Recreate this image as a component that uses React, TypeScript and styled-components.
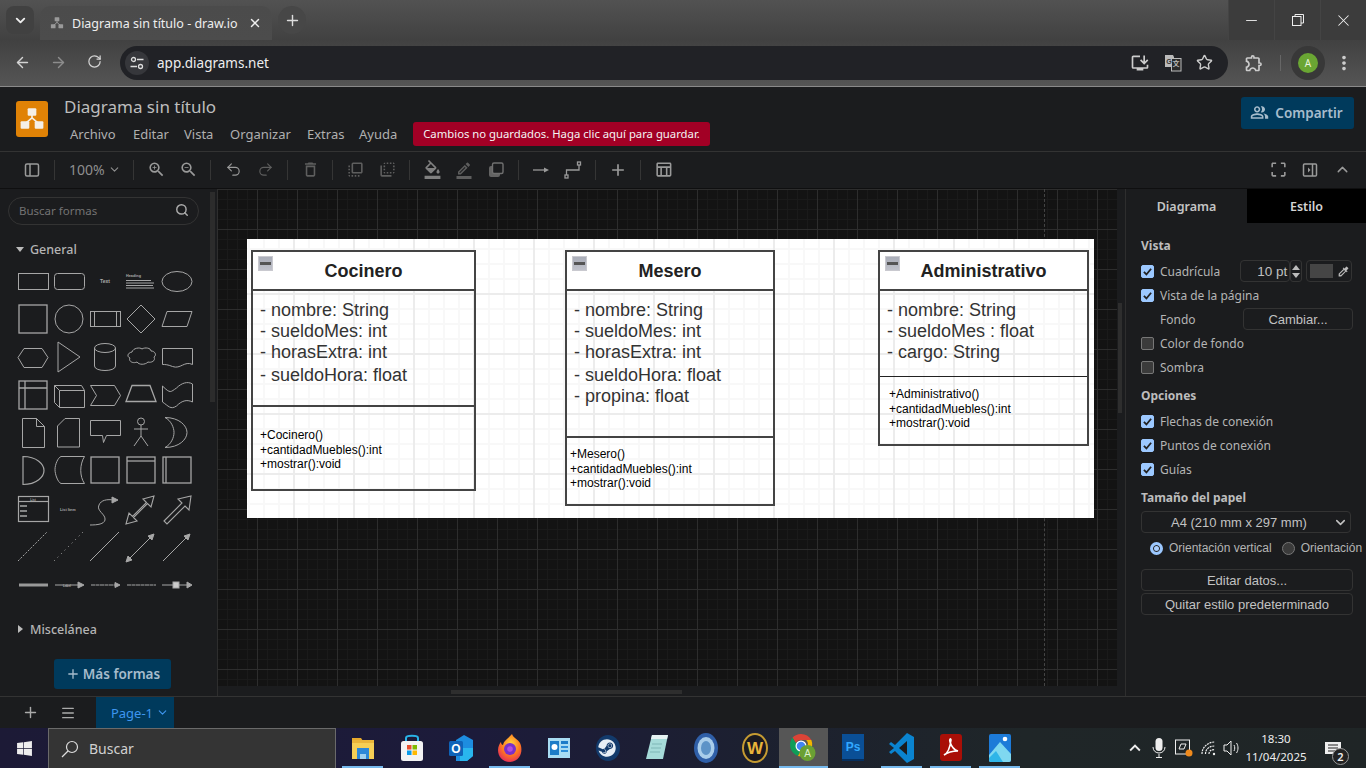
import React from "react";
import styled, { createGlobalStyle } from "styled-components";
import { ArrowLeft, ArrowRight, RotateCw, Star, X, Plus, ChevronDown, ChevronUp, Minus, Menu, Search, Undo2, Redo2 } from "lucide-react";
import {
  MdOutlineZoomIn, MdOutlineZoomOut, MdDeleteOutline, MdOutlineFlipToFront, MdOutlineFlipToBack,
  MdOutlineFormatColorFill, MdOutlineBorderColor, MdAdd, MdOutlineTableChart, MdCropFree, MdOutlineInstallDesktop,
  MdMoreVert, MdOutlineExtension, MdOutlinePeopleAlt, MdColorize, MdKeyboardArrowUp,
} from "react-icons/md";
import { FaWindows, FaSteam } from "react-icons/fa";

const UI = `"Noto Sans", "Open Sans", sans-serif`;
const ARIAL = `"Liberation Sans", Arial, sans-serif`;

const Global = createGlobalStyle`
  html, body { margin: 0; padding: 0; width: 1366px; height: 768px; overflow: hidden; background: #1b1c1e; font-family: ${UI}; }
  * { box-sizing: border-box; }
`;

const Screen = styled.div`width: 1366px; height: 768px; display: flex; flex-direction: column; overflow: hidden;`;

/* ---------- browser ---------- */
const TabStrip = styled.div`height: 40px; display: flex; align-items: flex-end; background: linear-gradient(#525252, #414141); padding-left: 6px;`;
const TabMenu = styled.div`width: 28px; height: 28px; margin-bottom: 6px; border-radius: 8px; background: #414141; color: #eee; display: flex; align-items: center; justify-content: center;`;
const Tab = styled.div`width: 232px; height: 34px; margin-left: 6px; padding: 0 10px; border-radius: 10px 10px 0 0; background: linear-gradient(#4b4b4b, #4c4c4c); display: flex; align-items: center; color: #eee; font-size: 12.5px;`;
const TabTitle = styled.span`margin-left: 8px; flex: 1; white-space: nowrap;`;
const NewTab = styled.div`width: 28px; height: 28px; margin: 0 0 6px 6px; border-radius: 50%; background: #474747; color: #ddd; display: flex; align-items: center; justify-content: center;`;
const WindowButtons = styled.div`margin-left: auto; align-self: stretch; display: flex;`;
const WindowButton = styled.div`width: 46px; background: #3c3c3c; border-left: 1px solid #444; color: #eee; display: flex; align-items: center; justify-content: center;`;
const BrowserBar = styled.div`height: 47px; display: flex; align-items: center; padding: 0 0 1px 0; background: linear-gradient(#414141, #555); border-bottom: 1px solid #8a8a8a;`;
const NavButton = styled.div<{ $dim?: boolean }>`width: 36px; display: flex; justify-content: center; color: ${p => (p.$dim ? "#8d8d8d" : "#d4d4d4")};`;
const NavGroup = styled.div`width: 120px; padding-left: 4px; display: flex;`;
const UrlBar = styled.div`width: 1108px; height: 34px; border-radius: 17px; background: #212226; display: flex; align-items: center; padding: 0 15px 0 5px; color: #eee; font-size: 13.5px;`;
const SiteInfo = styled.div`width: 24px; height: 24px; border-radius: 50%; background: #36373b; display: flex; align-items: center; justify-content: center; margin-right: 8px;`;
const UrlIcons = styled.div`margin-left: auto; display: flex; gap: 14px; align-items: center; color: #ccc;`;
const ExtensionSlot = styled.div`width: 52px; padding-left: 16px; color: #ccc; display: flex;`;
const BarDivider = styled.div`width: 1px; height: 16px; background: #666; margin-right: 10px;`;
const AvatarRing = styled.div`width: 34px; height: 34px; border-radius: 50%; background: #383838; display: flex; align-items: center; justify-content: center;`;
const Avatar = styled.div`width: 20px; height: 20px; border-radius: 50%; background: #6aa633; color: #e8f4dc; font-size: 10px; display: flex; align-items: center; justify-content: center;`;
const KebabSlot = styled.div`margin-left: 8px; color: #ccc; display: flex;`;

/* ---------- draw.io header ---------- */
const AppHeader = styled.div`height: 65px; display: flex; padding: 14px 12px 0 16px; background: #1b1c1e; border-bottom: 1px solid #333;`;
const Logo = styled.div`width: 32px; height: 36px; border-radius: 3px; background: #e08206; display: flex; align-items: center; justify-content: center;`;
const HeaderText = styled.div`margin-left: 16px; display: flex; flex-direction: column;`;
const DocTitle = styled.div`font-size: 17px; line-height: 16px; color: #bdbdbd; height: 22px; margin-top: -2px; white-space: nowrap;`;
const MenuRow = styled.div`display: flex; align-items: center; height: 25px; margin: 0 0 0 6px;`;
const MenuItem = styled.span<{ $w: number }>`width: ${p => p.$w}px; font-size: 13px; color: #b0b0b0; white-space: nowrap;`;
const Banner = styled.div`height: 24px; width: 297px; border-radius: 3px; background: #a20025; color: #f4f4f4; font-size: 11.3px; display: flex; align-items: center; justify-content: center; white-space: nowrap;`;
const Share = styled.div`margin-left: auto; margin-top: -4px; width: 113px; height: 32px; border-radius: 3px; background: #003a5c; color: #a6bccc; font-size: 13.5px; font-weight: 600; padding: 0 2px 1px 0; display: flex; align-items: center; justify-content: center; gap: 6px;`;

/* ---------- toolbar ---------- */
const Toolbar = styled.div`height: 37px; display: flex; align-items: center; padding: 0 8px 1px 16px; background: #1b1c1e; border-bottom: 1px solid #0f0f10;`;
const ToolButton = styled.div<{ $tone?: string }>`width: 32px; display: flex; align-items: center; justify-content: center; color: ${p => p.$tone ?? "#9a9a9a"};`;
const ToolSep = styled.div`width: 1px; height: 20px; margin: 0 6px 0 6px; background: #353535;`;
const ZoomSelect = styled.div`width: 66px; padding-left: 8px; display: flex; align-items: center; gap: 3px; color: #8e8e8e; font-size: 14px;`;
const ToolEnd = styled.div`margin-left: auto; display: flex;`;
const DIM = "#5e5e5e";
const MID = "#808080";

/* ---------- main ---------- */
const Main = styled.div`height: 507px; display: flex; background: #1b1c1e;`;
const Sidebar = styled.div`width: 218px; border-right: 1px solid #2e2e2e; position: relative; padding: 8px 0 0 8px; display: flex; flex-direction: column;`;
const SearchBox = styled.div`width: 191px; height: 28px; border: 1px solid #333; border-radius: 14px; padding: 0 9px 2px 10px; display: flex; align-items: center; justify-content: space-between; color: #737373; font-size: 11.5px; svg { color: #aaa; }`;
const SectionHead = styled.div`display: flex; align-items: center; height: 20px; font-size: 12.5px; color: #b4b4b4; font-weight: 500;`;
const Triangle = styled.span<{ $open?: boolean }>`width: 0; height: 0; margin-right: 6px; ${p => p.$open
    ? "margin-left: 8px; border-left: 4px solid transparent; border-right: 4px solid transparent; border-top: 5px solid #bbb;"
    : "margin-left: 10px; margin-right: 7px; border-top: 4px solid transparent; border-bottom: 4px solid transparent; border-left: 5px solid #bbb;"}`;
const GeneralHead = styled(SectionHead)`margin-top: 14px;`;
const ShapeGrid = styled.div`display: grid; grid-template-columns: repeat(5, 36px); grid-auto-rows: 38px; margin: 3px 0 0 7px; svg { display: block; overflow: visible; }`;
const MiscHead = styled(SectionHead)`margin-top: 15px;`;
const MoreShapes = styled.div`margin: 20px 0 0 46px; width: 117px; height: 30px; border-radius: 3px; background: #003a5c; color: #a6bccc; font-size: 13.5px; font-weight: 600; display: flex; align-items: center; justify-content: center; gap: 2px;`;
const SideScroll = styled.div`position: absolute; right: 2px; top: 3px; width: 5px; height: 210px; background: #2c2c2c;`;

const Center = styled.div`width: 908px; position: relative; border-right: 1px solid #2e2e2e;`;
const Canvas = styled.div`
  width: 899px; height: 497px; position: relative; overflow: hidden; background-color: #131313;
  background-image:
    linear-gradient(#2d2d2d 1px, transparent 1px), linear-gradient(90deg, #2d2d2d 1px, transparent 1px),
    linear-gradient(#1a1a1a 1px, transparent 1px), linear-gradient(90deg, #1a1a1a 1px, transparent 1px);
  background-size: 40px 40px, 40px 40px, 10px 10px, 10px 10px;
  background-position: 0 0, 39px 0, 0 0, 9px 0;
`;
const PageBreak = styled.div`position: absolute; left: 826px; top: 0; bottom: 0; border-left: 1px dashed #444;`;
const Page = styled.div`
  position: absolute; left: 29px; top: 50px; width: 847px; height: 279px; background-color: #fff;
  background-image:
    linear-gradient(#ececec 2px, transparent 2px), linear-gradient(90deg, #ececec 2px, transparent 2px),
    linear-gradient(#f8f8f8 2px, transparent 2px), linear-gradient(90deg, #f8f8f8 2px, transparent 2px);
  background-size: 60px 60px, 60px 60px, 15px 15px, 15px 15px;
  background-position: 0 -6px, 46px 0, 0 9px, 1px 0;
`;
const HScroll = styled.div`position: absolute; left: 233px; bottom: 2px; width: 231px; height: 4px; background: #2e2e2e;`;
const VScroll = styled.div`position: absolute; right: 3px; top: 114px; width: 4px; height: 110px; background: #2e2e2e;`;

const UmlBox = styled.div<{ $x: number; $w: number; $h: number }>`
  position: absolute; left: ${p => p.$x}px; top: 11px; width: ${p => p.$w}px; height: ${p => p.$h}px;
  border: 2px solid #444; display: flex; flex-direction: column; font-family: ${ARIAL}; background: transparent;
`;
const UmlHead = styled.div`height: 39px; flex: none; border-bottom: 2px solid #444; background: #fff; display: flex; align-items: center; justify-content: center; font-size: 18px; font-weight: 700; color: #222; position: relative; padding-top: 2px;`;
const CollapseIcon = styled.div`position: absolute; left: 5px; top: 4px; width: 15px; height: 15px; background: linear-gradient(#a9adb8, #c0c2cb); border: 1px solid #c9c9cf; display: flex; align-items: center; justify-content: center; &::after { content: ""; width: 11px; height: 3px; background: #555; }`;
const UmlAttrs = styled.div<{ $h: number; $thin?: boolean }>`height: ${p => p.$h}px; flex: none; padding: 9px 0 0 7px; border-bottom: ${p => (p.$thin ? "1px solid #222" : "2px solid #444")}; font-size: 18px; line-height: 21px; color: #333;`;
const AttrLine = styled.div<{ $extra?: boolean }>`white-space: nowrap; margin-top: ${p => (p.$extra ? 2 : 0)}px;`;
const UmlMethods = styled.div<{ $top: number; $left: number }>`padding: ${p => p.$top}px 0 0 ${p => p.$left}px; font-size: 12px; line-height: 14.5px; color: #000; white-space: nowrap;`;

const Strip = styled.div`height: 10px;`;

/* ---------- format panel ---------- */
const Panel = styled.div`width: 240px; overflow: hidden; color: #b9b9b9;`;
const Tabs = styled.div`display: flex; height: 34px;`;
const PanelTab = styled.div<{ $active?: boolean }>`width: ${p => (p.$active ? 121 : 119)}px; flex: none; display: flex; align-items: center; justify-content: center; font-size: 12.5px; font-weight: 600; background: ${p => (p.$active ? "transparent" : "#000")}; color: ${p => (p.$active ? "#c4c4c4" : "#d4d4d4")};`;
const PanelBody = styled.div`padding: 13px 0 0 15px; width: 240px;`;
const Heading = styled.div<{ $top?: number }>`font-size: 12px; font-weight: 700; color: #bdbdbd; height: 23px; line-height: 20px; margin-top: ${p => p.$top ?? 0}px; white-space: nowrap;`;
const Row = styled.div`height: 24px; display: flex; align-items: center; font-size: 12px; white-space: nowrap; color: #b4b4b4;`;
const Check = styled.span<{ $on?: boolean }>`width: 13px; height: 13px; margin-right: 6px; border-radius: 2px; flex: none; display: flex; align-items: center; justify-content: center; background: ${p => (p.$on ? "#9cc8ff" : "#3b3b3b")}; border: 1px solid ${p => (p.$on ? "#9cc8ff" : "#777")};`;
const Spinner = styled.div`margin-left: 20px; width: 50px; height: 22px; border: 1px solid #333; border-radius: 4px; display: flex; align-items: center; justify-content: flex-end; padding-right: 2px; font-size: 13.5px; color: #c0c0c0; font-family: ${ARIAL};`;
const Arrows = styled.div`width: 12px; height: 22px; border: 1px solid #333; border-radius: 3px; display: flex; flex-direction: column; align-items: center; justify-content: center; gap: 3px;`;
const Up = styled.span`border-left: 4px solid transparent; border-right: 4px solid transparent; border-bottom: 5px solid #bbb;`;
const Down = styled.span`border-left: 4px solid transparent; border-right: 4px solid transparent; border-top: 5px solid #bbb;`;
const ColorBox = styled.div`margin-left: 4px; width: 46px; height: 22px; border: 1px solid #333; border-radius: 4px; display: flex; align-items: center; padding-left: 3px; gap: 4px; color: #bbb;`;
const Swatch = styled.div`width: 23px; height: 14px; background: #454545;`;
const Label = styled.span`padding-left: 19px; width: 102px;`;
const FieldButton = styled.div<{ $w?: number }>`width: ${p => p.$w ?? 212}px; height: 22px; border: 1px solid #333; border-radius: 4px; display: flex; align-items: center; justify-content: center; font-family: ${ARIAL}; font-size: 13px; color: #c2c2c2; white-space: nowrap;`;
const PaperSelect = styled.div`width: 210px; height: 22px; border: 1px solid #333; border-radius: 4px; display: flex; align-items: center; padding: 0 2px 0 29px; justify-content: space-between; font-family: ${ARIAL}; font-size: 13px; color: #c2c2c2; white-space: nowrap;`;
const RadioRow = styled.div`height: 24px; margin-top: 3px; padding-left: 9px; display: flex; align-items: center; font-size: 12px; color: #b4b4b4; white-space: nowrap; font-family: ${ARIAL}; width: 300px;`;
const Radio = styled.span<{ $on?: boolean; $gap?: number }>`width: 13px; height: 13px; border-radius: 50%; margin: 0 6px 0 ${p => p.$gap ?? 0}px; flex: none; ${p => (p.$on ? "border: 3px solid #9cc8ff; box-shadow: inset 0 0 0 1px #222; background: #aacfff;" : "background: #3b3b3b; border: 1px solid #777;")}`;
const ButtonStack = styled.div`margin-top: 9px; display: flex; flex-direction: column; gap: 2px;`;

/* ---------- page tabs ---------- */
const PageBar = styled.div`height: 32px; display: flex; background: #1b1c1e; border-top: 1px solid #333; color: #aaa;`;
const PageAction = styled.div<{ $w: number }>`width: ${p => p.$w}px; display: flex; align-items: center; justify-content: center;`;
const PageTab = styled.div`width: 78px; margin-left: 20px; background: #003a5c; color: #3e96f0; font-size: 13px; display: flex; align-items: center; justify-content: flex-end; padding-right: 5px; gap: 3px;`;

/* ---------- taskbar ---------- */
const Taskbar = styled.div`height: 40px; display: flex; align-items: stretch; background: linear-gradient(90deg, #1c1a36 0%, #1c1b3a 35%, #1c2030 55%, #1f2628 75%, #1f2526 100%); color: #eee;`;
const StartButton = styled.div`width: 48px; display: flex; align-items: center; justify-content: center;`;
const TaskSearch = styled.div`width: 288px; background: #343434; border: 1px solid #6a6a6a; border-bottom: none; display: flex; align-items: center; padding-left: 12px; gap: 10px; font-size: 14px; color: #d0d0d0;`;
const AppCell = styled.div<{ $active?: boolean; $open?: boolean }>`
  width: 49px; display: flex; align-items: center; justify-content: center; position: relative; background: ${p => (p.$active ? "#565656" : "transparent")};
  ${p => p.$open ? `&::after { content: ""; position: absolute; left: 4px; right: 4px; bottom: 0; height: 2px; background: #76b9ed; }` : ""}
  ${p => p.$active ? `&::after { left: 0; right: 0; }` : ""}
`;
const AppRow = styled.div`display: flex; margin-left: 2px;`;
const Tray = styled.div`margin-left: auto; display: flex; align-items: center; color: #eee;`;
const TrayIcon = styled.div<{ $w: number }>`width: ${p => p.$w}px; display: flex; align-items: center; justify-content: center;`;
const Clock = styled.div`width: 66px; text-align: center; font-size: 11.5px; line-height: 18px; color: #eee; font-family: ${UI};`;
const Notify = styled.div`width: 46px; align-self: stretch; margin-left: 11px; padding-left: 5px; position: relative; display: flex; align-items: center;`;
const NotifyCount = styled.span`position: absolute; left: 12px; top: 20px; width: 17px; height: 17px; border-radius: 50%; border: 1px solid #999; background: #222; font-size: 11px; font-weight: 600; display: flex; align-items: center; justify-content: center; color: #eee;`;

/* ---------- shapes ---------- */
const S = ({ children }: { children?: React.ReactNode }) => (
  <svg width="36" height="38" viewBox="0 0 36 38" fill="none" stroke="#a6a6a6" strokeWidth="1">{children}</svg>
);
const T = ({ x, y, s = 5, children, a = "middle" }: { x: number; y: number; s?: number; a?: "middle" | "start"; children: string }) => (
  <text x={x} y={y} fontSize={s} fontFamily={ARIAL} fontWeight="700" fill="#aaa" stroke="none" textAnchor={a}>{children}</text>
);
const shapes: React.ReactNode[] = [
  <rect x="3.5" y="11.5" width="30" height="16" />,
  <rect x="3.5" y="11.5" width="30" height="16" rx="3" />,
  <T x={18} y={21}>Text</T>,
  <g><T x={3} y={14.5} s={3.8} a="start">Heading</T><path d="M3 18.500h25M3 21h28M3 23.500h27M3 26h28" strokeWidth=".9" stroke="#b5b5b5" /></g>,
  <ellipse cx="18" cy="19.5" rx="15" ry="10" />,

  <rect x="4" y="5" width="28" height="28" strokeWidth="1.3" />,
  <circle cx="18" cy="19" r="14" />,
  <g><rect x="3.5" y="11.5" width="30" height="15" /><path d="M7.5 11.5v15M29.5 11.5v15" /></g>,
  <path d="M18 5l14 14-14 14-14-14z" />,
  <path d="M8 11.5h25l-5 15H3z" />,

  <path d="M9 10.5h18l6 9-6 10H9l-6-10z" />,
  <path d="M7 4l22 15L7 34z" />,
  <g><ellipse cx="18" cy="10" rx="10.500" ry="4.500" /><path d="M7.500 10v18c0 6 21 6 21 0V10" /></g>,
  <path d="M9 14c1-4 8-5 10-3 3-2 9-1 9 2 4 0 6 4 3 6 2 4-3 6-6 5-3 3-9 3-11 0-4 2-9-1-7-4-3-1-3-5 2-6z" />,
  <path d="M3.500 10.500h30v16c-8-4-12 5-20 2-5-2-7-2-10-2z" />,

  <g strokeWidth="1.3"><rect x="4" y="5" width="28" height="28" /><path d="M4 12h28M10 5v28" /></g>,
  <path d="M3.500 9.500h27l3 5v17h-25l-5-5zM3.500 9.500l5 5h25M8.500 14.500v17" />,
  <path d="M3.500 9.500h24l6 10-6 10h-24l6-10z" />,
  <path d="M9 9.500h18l6 16H3z" strokeWidth="1.300" />,
  <path d="M3.500 10c8 8 8 6 14 2 5-5 11-7 16-4v18c-6-3-11-1-16 4-6 4-8 0-14-4z" />,

  <path d="M7.500 4.500h14l8 8v21h-22zM21.500 4.500v8h8" />,
  <path d="M14 4.500h14.500v28.500H6.500V12z" />,
  <path d="M3.500 6.500h30v15h-14l-3 7-1-7h-12z" />,
  <g><circle cx="18" cy="7.500" r="3.500" /><path d="M18 11v11M11 15h14M18 22l-7 10M18 22l7 10" /></g>,
  <path d="M6 3.500c14 0 22 8 22 15s-8 15-22 15c6-3 9-10 9-15s-3-12-9-15z" />,

  <path d="M8 4.500c14 0 21 8 21 14s-7 14-21 14z" strokeWidth="1.200" />,
  <path d="M10 4.500h23.500c-5 8-5 20 0 27H10c-3-1-6-9-6-14s3-12 6-13z" />,
  <rect x="4" y="5" width="28" height="26" strokeWidth="1.300" />,
  <g strokeWidth="1.300"><rect x="4" y="5" width="28" height="26" /><path d="M4 9h28" /></g>,
  <g strokeWidth="1.300"><rect x="4" y="5" width="28" height="26" /><path d="M7 5v26" /></g>,

  <g strokeWidth="1.200"><rect x="3.500" y="6.500" width="30" height="25" /><path d="M3.500 11.500h30" /><T x={18} y={10.500} s={3}>List</T><path d="M5 16h7M5 21h7M5 26h7" strokeWidth="1.300" /></g>,
  <T x={9} y={21} s={3.800} a="start">List Item</T>,
  <g><path d="M3 35c8 0 14-1 15-5 1-6-9-9-6-15 2-5 8-6 15-5" /><path d="M25 7l6 3-6 3z" fill="#a6a6a6" /></g>,
  <path d="M3 34l3-11 3.500 3.500 14-14L20 9l11-3-3 11-3.500-3.500-14 14 3.500 3.500z" strokeWidth="1.100" />,
  <path d="M5 31l18-18-4-4 13-3-2 14-4-4-18 18z" strokeWidth="1.100" />,

  <path d="M3 33L32 4" strokeDasharray="2 1.500" />,
  <path d="M3 33L32 4" strokeDasharray="1 4" />,
  <path d="M3 33L32 4" />,
  <g><path d="M5 32L29 8" /><path d="M3 34l2-6 4 4zM31 6l-2 6-4-4z" fill="#a6a6a6" /></g>,
  <g><path d="M4 33L29 8" /><path d="M31 6l-2 6-4-4z" fill="#a6a6a6" /></g>,

  <path d="M4 19h29" strokeWidth="3" stroke="#999" />,
  <g><path d="M4 19h25" /><path d="M33 19l-6-3v6z" fill="#a6a6a6" /><T x={16} y={20.500} s={3}>Label</T></g>,
  <g><path d="M4 19h26" strokeDasharray="4 .5" strokeWidth="1.200" /><path d="M33 19l-5-2.500v5z" fill="#a6a6a6" /></g>,
  <g><path d="M4 19h29" strokeDasharray="4 .5" strokeWidth="1.200" /></g>,
  <g><path d="M3 19h27" /><path d="M33 19l-5-3v6z" fill="#a6a6a6" /><rect x="14" y="16" width="6" height="6" fill="#ccc" /></g>,
];

/* ---------- drawn icons ---------- */
const DrawioGlyph = ({ size, color, stem }: { size: number; color: string; stem: string }) => (
  <svg width={size} height={size} viewBox="0 0 24 24">
    <path d="M12 8v4M12 11L6 16M12 11l6 5" stroke={stem} strokeWidth="1.500" fill="none" />
    <rect x="8" y="2" width="8" height="7" rx="1" fill={color} />
    <rect x="1.500" y="14" width="8" height="7" rx="1" fill={color} />
    <rect x="14.500" y="14" width="8" height="7" rx="1" fill={color} />
  </svg>
);
const TuneGlyph = () => (
  <svg width="14" height="14" viewBox="0 0 14 14" fill="none" stroke="#ddd" strokeWidth="1.300">
    <circle cx="3.500" cy="3.500" r="2" /><path d="M7 3.500h6.500M.500 10.500H7" /><circle cx="10.500" cy="10.500" r="2" />
  </svg>
);
const TranslateGlyph = () => (
  <svg width="18" height="18" viewBox="0 0 18 18">
    <path d="M1 1h8l1 2v10H1z" fill="#bbb" />
    <rect x="7.500" y="4.500" width="9.500" height="12.500" fill="#2a2a2a" stroke="#bbb" />
    <text x="5" y="10" fontSize="7" fontWeight="700" textAnchor="middle" fontFamily={ARIAL} fill="#333">G</text>
    <text x="12" y="12" fontSize="7" fontWeight="700" textAnchor="middle" fontFamily={`"Noto Sans CJK SC", sans-serif`} fill="#bbb">文</text>
  </svg>
);
const PanelLeftGlyph = () => (
  <svg width="16" height="16" viewBox="0 0 16 16" fill="none" stroke="#9a9a9a" strokeWidth="1.500"><rect x="1.500" y="2" width="13" height="12" rx="1.500" /><path d="M6 2v12" /></svg>
);
const PanelRightGlyph = () => (
  <svg width="16" height="16" viewBox="0 0 16 16" fill="none" stroke="#9a9a9a" strokeWidth="1.500"><rect x="1.500" y="2" width="13" height="12" rx="1" /><path d="M10.500 2v12" /><path d="M6 5.500l2.500 2.500L6 10.500z" fill="#9a9a9a" stroke="none" /></svg>
);
const ConnectGlyph = () => (
  <svg width="18" height="10" viewBox="0 0 18 10"><path d="M1 5h13" stroke="#9a9a9a" strokeWidth="1.300" /><path d="M17 5l-5-2.500v5z" fill="#9a9a9a" /></svg>
);
const WaypointGlyph = () => (
  <svg width="18" height="18" viewBox="0 0 18 18" fill="none" stroke="#9a9a9a" strokeWidth="1.300"><rect x="13.500" y="1" width="3" height="3" /><rect x="1" y="14" width="3" height="3" /><path d="M15 4v5H2.500v5" /></svg>
);
const ShadowCopyGlyph = () => (
  <svg width="18" height="18" viewBox="0 0 18 18"><rect x="2" y="5" width="11" height="11" rx="2" fill="#636363" /><rect x="5.500" y="2" width="10.500" height="10.500" rx="1.500" fill="#1b1c1e" stroke="#707070" strokeWidth="1.400" /></svg>
);

const Explorer = () => (<svg width="26" height="26" viewBox="0 0 26 26"><path d="M2 3h9l2 3H2z" fill="#e6a92c" /><rect x="2" y="5" width="22" height="19" fill="#f6cf55" /><rect x="2" y="5" width="22" height="3" fill="#eab53a" /><path d="M7 13h12v11h-3v-5h-6v5H7z" fill="#2c88d8" /><rect x="10" y="19" width="6" height="5" fill="#9fd0ef" /></svg>);
const Store = () => (<svg width="26" height="28" viewBox="0 0 26 28"><path d="M7 7V4c0-3 12-3 12 0v3" fill="none" stroke="#29b3e8" strokeWidth="2" /><rect x="2" y="7" width="22" height="20" rx="2.500" fill="#f3f3f3" /><rect x="8" y="11" width="4.500" height="4.500" fill="#e8502f" /><rect x="13.500" y="11" width="4.500" height="4.500" fill="#7fba00" /><rect x="8" y="16.500" width="4.500" height="4.500" fill="#0a9bea" /><rect x="13.500" y="16.500" width="4.500" height="4.500" fill="#ffb900" /></svg>);
const Outlook = () => (<svg width="26" height="28" viewBox="0 0 26 28"><path d="M8 6l8-5 9 5v16l-6 5H8z" fill="#1d8de0" /><path d="M12 14h13v8l-6 5h-7z" fill="#29b6ee" /><rect x="1" y="7" width="14" height="15" rx="1.500" fill="#0f63b8" /><text x="8" y="19" fontSize="12" fontWeight="700" textAnchor="middle" fontFamily={ARIAL} fill="#fff">O</text></svg>);
const Firefox = () => (<svg width="26" height="30" viewBox="0 0 26 30"><defs><radialGradient id="ff" cx="55%" cy="35%" r="70%"><stop offset="0" stopColor="#ffd53c" /><stop offset=".55" stopColor="#ff7a1f" /><stop offset="1" stopColor="#e4275d" /></radialGradient></defs><path d="M15 1c1 4 6 5 8 9 3 6 2 18-10 19C5 29 1 23 1 17c0-4 2-7 3-8 0 2 1 3 2 3 1-5 6-7 9-11z" fill="url(#ff)" /><circle cx="13" cy="16" r="6" fill="#7b2fc9" /><circle cx="13" cy="16" r="2.800" fill="#b14adf" /></svg>);
const Monitor = () => (<svg width="24" height="22" viewBox="0 0 24 22"><rect x="1" y="1" width="22" height="20" fill="#a8dcf3" /><rect x="3" y="4" width="9" height="14" fill="#1c7cc8" /><circle cx="7.500" cy="10" r="3" fill="#fff" /><rect x="14" y="4" width="7" height="3" fill="#1c7cc8" /><rect x="14" y="9" width="7" height="2" fill="#2d8ed8" /><rect x="14" y="13" width="7" height="2" fill="#2d8ed8" /></svg>);
const Steam = () => (<svg width="26" height="28" viewBox="0 0 26 28"><ellipse cx="13" cy="14" rx="12" ry="13" fill="#123a6b" /><foreignObject x="3" y="5" width="20" height="18"><FaSteam size={18} color="#e6eef5" /></foreignObject></svg>);
const Notepad = () => (<svg width="24" height="28" viewBox="0 0 24 28"><path d="M7 1h16l-5 24H1z" fill="#a6dbd9" /><path d="M7 1h16l-1 4H6z" fill="#e6f3f3" /><path d="M7 10h10M6 14h10M5 18h10" stroke="#7fb7b7" /></svg>);
const Ring = () => (<svg width="26" height="32" viewBox="0 0 26 32"><ellipse cx="13" cy="16" rx="12" ry="15" fill="#2f5fa8" /><ellipse cx="13" cy="16" rx="8.500" ry="11" fill="#a9cdea" /><ellipse cx="13" cy="16" rx="5" ry="7" fill="#5d93c7" /></svg>);
const Wow = () => (<svg width="26" height="30" viewBox="0 0 26 30"><ellipse cx="13" cy="15" rx="12" ry="14" fill="#1a1a20" stroke="#c59b32" strokeWidth="2" /><text x="13" y="21" fontSize="17" fontWeight="700" textAnchor="middle" fontFamily={ARIAL} fill="#e8b53a">W</text></svg>);
const Chrome = () => (<svg width="30" height="32" viewBox="0 0 30 32"><path d="M12 2a12 12 0 0 1 10.400 6H12a6 6 0 0 0-5.200 3L3.500 5.500A12 12 0 0 1 12 2z" fill="#db4437" /><path d="M3.500 5.500L8 13a6 6 0 0 0 4 5l-3 6A12 12 0 0 1 3.500 5.500z" fill="#0f9d58" /><path d="M22.400 8A12 12 0 0 1 9 24l3-6a6 6 0 0 0 5.200-10z" fill="#f4b400" /><circle cx="12" cy="14" r="5.500" fill="#fff" /><circle cx="12" cy="14" r="4.300" fill="#4285f4" /><circle cx="18.500" cy="21" r="8" fill="#6aa033" /><text x="18.500" y="25" fontSize="10" textAnchor="middle" fontFamily={ARIAL} fill="#dff0cc">A</text></svg>);
const Photoshop = () => (<svg width="22" height="28" viewBox="0 0 22 28"><rect x="0" y="0" width="22" height="27" fill="#0a4f96" /><rect x="0" y="25" width="22" height="2" fill="#062e5c" /><text x="11" y="17" fontSize="12" fontWeight="700" textAnchor="middle" fontFamily={ARIAL} fill="#31a8ff">Ps</text></svg>);
const VsCode = () => (<svg width="26" height="32" viewBox="0 0 26 32"><path d="M18 1l7 4v22l-7 4L6 19l-4 3-2-2 5-4-5-4 2-2 4 3z" fill="#0a84d0" /><path d="M18 9v14l-8-7z" fill="#1b1c1e" /></svg>);
const Pdf = () => (<svg width="22" height="28" viewBox="0 0 22 28"><rect x="0" y="0" width="22" height="27" rx="3" fill="#a90f07" /><path d="M4 21c4-2 6-7 7-15 0-2-2-1-1 2 2 6 4 8 8 9-5 0-10 1-14 4z" fill="none" stroke="#fff" strokeWidth="1.600" /></svg>);
const Photos = () => (<svg width="22" height="30" viewBox="0 0 22 30"><rect x="0" y="1" width="22" height="28" rx="2" fill="#1d7bd8" /><path d="M0 22l11-13 11 12v6a2 2 0 0 1-2 2H2a2 2 0 0 1-2-2z" fill="#7fd8f0" /><path d="M0 25l7-7 7 11H2a2 2 0 0 1-2-2z" fill="#2fb5e8" /><circle cx="16" cy="6" r="2.300" fill="#fff" /></svg>);
const MicGlyph = () => (<svg width="14" height="22" viewBox="0 0 14 22"><rect x="3.500" y="1" width="7" height="13" rx="3.500" fill="#eee" /><path d="M1 10c0 8 12 8 12 0M7 17v3M4 20.500h6" fill="none" stroke="#eee" /></svg>);
const CamGlyph = () => (<svg width="20" height="20" viewBox="0 0 20 20"><rect x="1.500" y="2" width="14" height="14" fill="none" stroke="#eee" /><path d="M5 11l2-5h5l-2 5z" fill="none" stroke="#eee" /><circle cx="15" cy="15" r="3.500" fill="#f08a1c" /></svg>);
const WifiGlyph = () => (<svg width="16" height="16" viewBox="0 0 16 16" fill="none" stroke="#eee" strokeWidth="1.200"><path d="M1 14C1 7 7 2 14 2" strokeDasharray="2 .8" /><path d="M4.500 14c0-5 4-8 9.500-8" strokeDasharray="2 .8" /><path d="M8 14c0-3 2-4.500 6-4.500" strokeDasharray="2 .8" /><circle cx="13" cy="14" r="1.200" fill="#eee" stroke="none" /></svg>);
const VolumeGlyph = () => (<svg width="18" height="18" viewBox="0 0 18 18" fill="none" stroke="#eee"><path d="M1 6h3l4-4v14l-4-4H1zM11 6c1 2 1 4 0 6M13.500 4c2 3 2 7 0 10" /></svg>);

const classes = [
  { name: "Cocinero", x: 4, w: 225, h: 241, attrsH: 116, top: 21, left: 7, attrs: [["- nombre: String"], ["- sueldoMes: int"], ["- horasExtra: int"], ["- sueldoHora: float", true]], thin: false },
  { name: "Mesero", x: 318, w: 210, h: 256, attrsH: 147, top: 9, left: 3, attrs: [["- nombre: String"], ["- sueldoMes: int"], ["- horasExtra: int"], ["- sueldoHora: float", true], ["- propina: float"]], thin: false },
  { name: "Administrativo", x: 631, w: 211, h: 196, attrsH: 86, top: 10, left: 9, attrs: [["- nombre: String"], ["- sueldoMes : float"], ["- cargo: String"]], thin: true },
];

const toolsA = [MdOutlineZoomIn, MdOutlineZoomOut];
const menus: [string, number][] = [["Archivo", 63], ["Editar", 51], ["Vista", 46], ["Organizar", 77], ["Extras", 52], ["Ayuda", 54]];

const apps: { el: React.ReactNode; open?: boolean; active?: boolean }[] = [
  { el: <Explorer />, open: true }, { el: <Store /> }, { el: <Outlook /> }, { el: <Firefox />, open: true }, { el: <Monitor /> },
  { el: <Steam /> }, { el: <Notepad /> }, { el: <Ring /> }, { el: <Wow /> }, { el: <Chrome />, active: true, open: true },
  { el: <Photoshop /> }, { el: <VsCode />, open: true }, { el: <Pdf />, open: true }, { el: <Photos />, open: true },
];

const CheckMark = () => (<svg width="9" height="9" viewBox="0 0 10 10"><path d="M1 5.500l2.800 2.800L9 2" fill="none" stroke="#222" strokeWidth="2" /></svg>);
const CheckRow = ({ on, label }: { on?: boolean; label: string }) => (
  <Row><Check $on={on}>{on && <CheckMark />}</Check>{label}</Row>
);

export default function App() {
  return (
    <Screen>
      <Global />
      <TabStrip>
        <TabMenu><ChevronDown size={15} strokeWidth={3} /></TabMenu>
        <Tab>
          <DrawioGlyph size={14} color="#9a9a9a" stem="#9a9a9a" />
          <TabTitle>Diagrama sin título - draw.io</TabTitle>
          <X size={14} strokeWidth={2.500} />
        </Tab>
        <NewTab><Plus size={17} strokeWidth={2} /></NewTab>
        <WindowButtons>
          <WindowButton><Minus size={17} strokeWidth={1.300} /></WindowButton>
          <WindowButton>
            <svg width="12" height="12" viewBox="0 0 12 12" fill="none" stroke="#eee"><rect x=".5" y="2.500" width="8.500" height="9" /><path d="M3 2.500V.5h8.500V9H9" /></svg>
          </WindowButton>
          <WindowButton><X size={19} strokeWidth={1.300} /></WindowButton>
        </WindowButtons>
      </TabStrip>
      <BrowserBar>
        <NavGroup>
          <NavButton><ArrowLeft size={17} /></NavButton>
          <NavButton $dim><ArrowRight size={17} /></NavButton>
          <NavButton><RotateCw size={15} /></NavButton>
        </NavGroup>
        <UrlBar>
          <SiteInfo><TuneGlyph /></SiteInfo>
          app.diagrams.net
          <UrlIcons>
            <MdOutlineInstallDesktop size={20} />
            <TranslateGlyph />
            <Star size={17} />
          </UrlIcons>
        </UrlBar>
        <ExtensionSlot><MdOutlineExtension size={20} /></ExtensionSlot>
        <BarDivider />
        <AvatarRing><Avatar>A</Avatar></AvatarRing>
        <KebabSlot><MdMoreVert size={22} /></KebabSlot>
      </BrowserBar>

      <AppHeader>
        <Logo><DrawioGlyph size={26} color="#f5efe6" stem="#f5efe6" /></Logo>
        <HeaderText>
          <DocTitle>Diagrama sin título</DocTitle>
          <MenuRow>
            {menus.map(([m, w]) => <MenuItem key={m} $w={w}>{m}</MenuItem>)}
            <Banner>Cambios no guardados. Haga clic aquí para guardar.</Banner>
          </MenuRow>
        </HeaderText>
        <Share><MdOutlinePeopleAlt size={19} />Compartir</Share>
      </AppHeader>

      <Toolbar>
        <ToolButton><PanelLeftGlyph /></ToolButton>
        <ToolSep />
        <ZoomSelect>100%<ChevronDown size={13} /></ZoomSelect>
        <ToolSep />
        {toolsA.map((I, i) => <ToolButton key={i}><I size={19} /></ToolButton>)}
        <ToolSep />
        <ToolButton><Undo2 size={17} strokeWidth={1.600} /></ToolButton>
        <ToolButton $tone={DIM}><Redo2 size={17} strokeWidth={1.600} /></ToolButton>
        <ToolSep />
        <ToolButton $tone={DIM}><MdDeleteOutline size={19} /></ToolButton>
        <ToolSep />
        <ToolButton $tone={DIM}><MdOutlineFlipToFront size={19} /></ToolButton>
        <ToolButton $tone={DIM}><MdOutlineFlipToBack size={19} /></ToolButton>
        <ToolSep />
        <ToolButton $tone={MID}><MdOutlineFormatColorFill size={19} /></ToolButton>
        <ToolButton $tone={DIM}><MdOutlineBorderColor size={18} /></ToolButton>
        <ToolButton><ShadowCopyGlyph /></ToolButton>
        <ToolSep />
        <ToolButton><ConnectGlyph /></ToolButton>
        <ToolButton><WaypointGlyph /></ToolButton>
        <ToolSep />
        <ToolButton><MdAdd size={20} /></ToolButton>
        <ToolSep />
        <ToolButton><MdOutlineTableChart size={19} /></ToolButton>
        <ToolEnd>
          <ToolButton><MdCropFree size={19} /></ToolButton>
          <ToolButton><PanelRightGlyph /></ToolButton>
          <ToolButton><ChevronUp size={17} /></ToolButton>
        </ToolEnd>
      </Toolbar>

      <Main>
        <Sidebar>
          <SearchBox>Buscar formas<Search size={14} strokeWidth={2.500} /></SearchBox>
          <GeneralHead><Triangle $open />General</GeneralHead>
          <ShapeGrid>{shapes.map((s, i) => <S key={i}>{s}</S>)}</ShapeGrid>
          <MiscHead><Triangle />Miscelánea</MiscHead>
          <MoreShapes><MdAdd size={16} />Más formas</MoreShapes>
          <SideScroll />
        </Sidebar>
        <Center>
          <Canvas>
            <PageBreak />
            <Page>
              {classes.map(c => (
                <UmlBox key={c.name} $x={c.x} $w={c.w} $h={c.h}>
                  <UmlHead><CollapseIcon />{c.name}</UmlHead>
                  <UmlAttrs $h={c.attrsH} $thin={c.thin}>
                    {c.attrs.map(([t, e]) => <AttrLine key={t as string} $extra={!!e}>{t}</AttrLine>)}
                  </UmlAttrs>
                  <UmlMethods $top={c.top} $left={c.left}>
                    <div>+{c.name}()</div>
                    <div>+cantidadMuebles():int</div>
                    <div>+mostrar():void</div>
                  </UmlMethods>
                </UmlBox>
              ))}
            </Page>
          </Canvas>
          <Strip />
          <HScroll />
          <VScroll />
        </Center>
        <Panel>
          <Tabs>
            <PanelTab $active>Diagrama</PanelTab>
            <PanelTab>Estilo</PanelTab>
          </Tabs>
          <PanelBody>
            <Heading>Vista</Heading>
            <Row>
              <Check $on><CheckMark /></Check>Cuadrícula
              <Spinner>10 pt</Spinner>
              <Arrows><Up /><Down /></Arrows>
              <ColorBox><Swatch /><MdColorize size={13} /></ColorBox>
            </Row>
            <CheckRow on label="Vista de la página" />
            <Row><Label>Fondo</Label><FieldButton $w={110}>Cambiar...</FieldButton></Row>
            <CheckRow label="Color de fondo" />
            <CheckRow label="Sombra" />
            <Heading $top={7}>Opciones</Heading>
            <CheckRow on label="Flechas de conexión" />
            <CheckRow on label="Puntos de conexión" />
            <CheckRow on label="Guías" />
            <Heading $top={7}>Tamaño del papel</Heading>
            <PaperSelect>A4 (210 mm x 297 mm)<ChevronDown size={15} strokeWidth={2.500} /></PaperSelect>
            <RadioRow>
              <Radio $on />Orientación vertical
              <Radio $gap={10} />Orientación
            </RadioRow>
            <ButtonStack>
              <FieldButton>Editar datos...</FieldButton>
              <FieldButton>Quitar estilo predeterminado</FieldButton>
            </ButtonStack>
          </PanelBody>
        </Panel>
      </Main>

      <PageBar>
        <PageAction $w={60}><Plus size={17} /></PageAction>
        <PageAction $w={16}><Menu size={18} /></PageAction>
        <PageTab>Page-1<ChevronDown size={13} /></PageTab>
      </PageBar>

      <Taskbar>
        <StartButton><FaWindows size={17} /></StartButton>
        <TaskSearch>
          <svg width="18" height="18" viewBox="0 0 18 18" fill="none" stroke="#ddd" strokeWidth="1.200"><circle cx="11" cy="7" r="5.500" /><path d="M7 11l-6 6" /></svg>
          Buscar
        </TaskSearch>
        <AppRow>
          {apps.map((a, i) => <AppCell key={i} $open={a.open} $active={a.active}>{a.el}</AppCell>)}
        </AppRow>
        <Tray>
          <TrayIcon $w={24}><MdKeyboardArrowUp size={22} /></TrayIcon>
          <TrayIcon $w={24}><MicGlyph /></TrayIcon>
          <TrayIcon $w={26}><CamGlyph /></TrayIcon>
          <TrayIcon $w={24}><WifiGlyph /></TrayIcon>
          <TrayIcon $w={22}><VolumeGlyph /></TrayIcon>
          <Clock><div>18:30</div><div>11/04/2025</div></Clock>
          <Notify>
            <svg width="16" height="12" viewBox="0 0 16 12"><path d="M0 0h16v12H0z" fill="#eee" /><path d="M3 3h10M3 6h10M3 9h7" stroke="#222" /></svg>
            <NotifyCount>2</NotifyCount>
          </Notify>
        </Tray>
      </Taskbar>
    </Screen>
  );
}
